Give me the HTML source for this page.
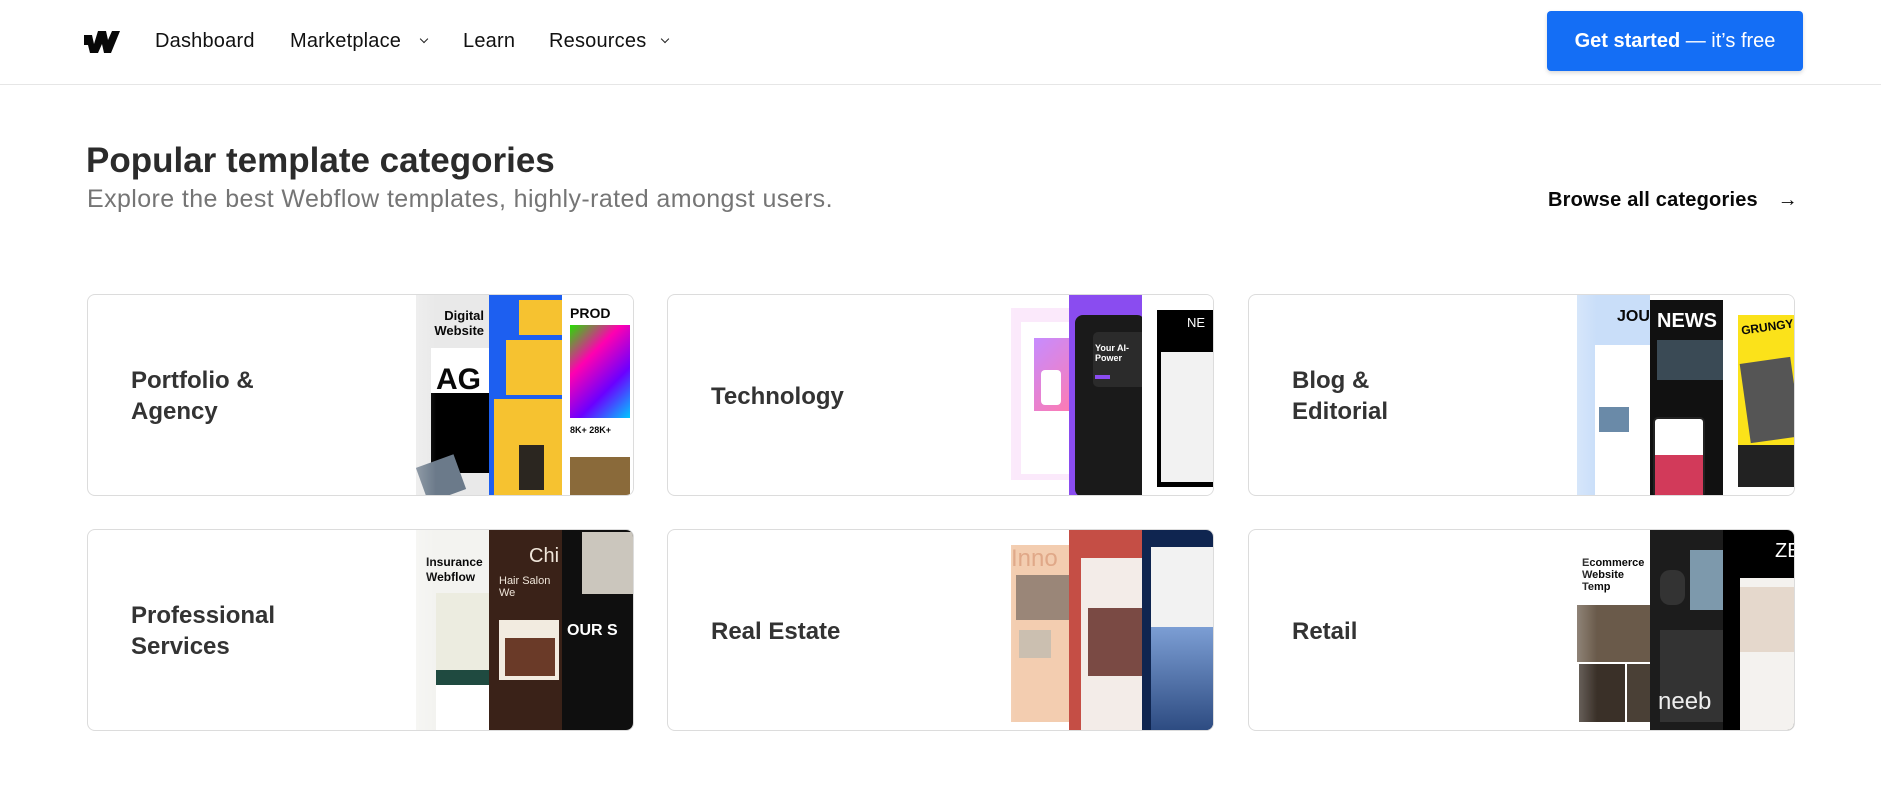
<!DOCTYPE html>
<html><head><meta charset="utf-8"><style>
*{margin:0;padding:0;box-sizing:border-box}
body{width:1881px;height:804px;background:#fff;font-family:"Liberation Sans",Arial,sans-serif;position:relative;overflow:hidden;color:#080808}
.hdr{position:absolute;left:0;top:0;width:1881px;height:85px;border-bottom:1px solid #e6e6e6}
.nav{position:absolute;top:30px;font-size:20px;color:#111;letter-spacing:.2px}
.chev{position:absolute;top:36px;width:6px;height:6px;border-right:1.5px solid #222;border-bottom:1.5px solid #222;transform:rotate(45deg)}
.btn{position:absolute;left:1547px;top:11px;width:256px;height:60px;background:#146ef5;border-radius:4px;box-shadow:0 2px 4px rgba(0,0,0,.15);color:#fff;font-size:20px;line-height:60px;text-align:center}
h1{position:absolute;left:86px;top:141px;font-size:35px;font-weight:bold;color:#2b2b2b}
.sub{position:absolute;left:87px;top:185px;font-size:25px;color:#757575;letter-spacing:.4px}
.browse{position:absolute;left:1548px;top:189px;font-size:20px;font-weight:bold;color:#080808;letter-spacing:.2px}
.card{position:absolute;width:547px;height:202px;border:1px solid #dcdcdc;border-radius:8px;overflow:hidden;background:#fff}
.lbl{position:absolute;left:43px;font-size:24px;font-weight:bold;color:#333;line-height:31px}
.img{position:absolute;left:328px;top:0;width:219px;height:202px}
.c{position:absolute;top:0;height:202px;overflow:hidden}
.c1{left:0;width:73px}.c2{left:73px;width:73px}.c3{left:146px;width:73px}
.fade{position:absolute;left:-60px;top:0;width:80px;height:202px;background:linear-gradient(90deg,#fff,rgba(255,255,255,0))}
.b{position:absolute}
</style></head><body>
<div class="hdr">
<svg style="position:absolute;left:84px;top:31px" width="36" height="22" viewBox="0 0 36 22"><path d="M0 4h8l2 9 4-13h8l2 9 4-9h8l-9 22h-7l-2-9-4 9H6L4 14H0z" fill="#080808"/><path d="M0 4h7v10H0z" fill="#080808"/></svg>
<div class="nav" style="left:155px">Dashboard</div>
<div class="nav" style="left:290px">Marketplace</div><div class="chev" style="left:421px"></div>
<div class="nav" style="left:463px">Learn</div>
<div class="nav" style="left:549px">Resources</div><div class="chev" style="left:662px"></div>
<div class="btn"><b>Get started</b> — it’s free</div>
</div>
<h1>Popular template categories</h1>
<div class="sub">Explore the best Webflow templates, highly-rated amongst users.</div>
<div class="browse">Browse all categories <span style="margin-left:14px;font-weight:normal">→</span></div>

<!-- row 1 -->
<div class="card" style="left:87px;top:294px">
<div class="lbl" style="top:70px">Portfolio &amp;<br>Agency</div>
<div class="img">
<div class="c c1" style="background:#e9e9e9"><div class="b" style="left:8px;top:13px;font-size:13px;font-weight:bold;line-height:15px;text-align:right;width:60px">Digital<br>Website</div><div class="b" style="left:15px;top:53px;width:60px;height:45px;background:#fff"></div><div class="b" style="left:20px;top:68px;font-size:30px;font-weight:bold">AG</div><div class="b" style="left:15px;top:98px;width:60px;height:80px;background:#000"></div><div class="b" style="left:5px;top:165px;width:40px;height:37px;background:#6b7a8a;transform:rotate(-20deg)"></div></div>
<div class="c c2" style="background:#1d5ff0"><div class="b" style="left:30px;top:5px;width:45px;height:35px;background:#f6c230"></div><div class="b" style="left:17px;top:45px;width:60px;height:55px;background:#f6c230"></div><div class="b" style="left:5px;top:104px;width:70px;height:98px;background:#f6c230"></div><div class="b" style="left:30px;top:150px;width:25px;height:45px;background:#2b2620"></div></div>
<div class="c c3" style="background:#fff"><div class="b" style="left:8px;top:10px;font-size:14px;font-weight:bold">PROD</div><div class="b" style="left:8px;top:30px;width:60px;height:93px;background:linear-gradient(135deg,#25e000,#ff00b0,#6b00ff,#00c8ff)"></div><div class="b" style="left:8px;top:130px;font-size:9px;font-weight:bold">8K+ 28K+</div><div class="b" style="left:8px;top:162px;width:60px;height:40px;background:#8a6a3a"></div></div>
<div class="fade"></div></div></div>

<div class="card" style="left:667px;top:294px">
<div class="lbl" style="top:86px">Technology</div>
<div class="img">
<div class="c c1" style="background:#fff"><div class="b" style="left:15px;top:13px;width:60px;height:172px;background:#fbe9fb"></div><div class="b" style="left:25px;top:27px;width:50px;height:152px;background:#fff"></div><div class="b" style="left:38px;top:43px;width:40px;height:73px;background:linear-gradient(135deg,#c68cff,#ff7ab0)"></div><div class="b" style="left:45px;top:75px;width:20px;height:35px;background:#fff;border-radius:4px"></div></div>
<div class="c c2" style="background:#8a4cf0"><div class="b" style="left:6px;top:20px;width:70px;height:182px;background:#1a1a1a;border-radius:8px"></div><div class="b" style="left:24px;top:37px;width:55px;height:55px;background:#2b2b2b;border-radius:5px"></div><div class="b" style="left:26px;top:48px;font-size:9px;color:#fff;font-weight:bold">Your AI-Power</div><div class="b" style="left:26px;top:80px;width:15px;height:4px;background:#8a4cf0"></div></div>
<div class="c c3" style="background:#fff"><div class="b" style="left:15px;top:15px;width:60px;height:177px;background:#000"></div><div class="b" style="left:45px;top:20px;font-size:13px;color:#fff">NE</div><div class="b" style="left:19px;top:57px;width:55px;height:130px;background:#f2f2f2"></div></div>
<div class="fade"></div></div></div>

<div class="card" style="left:1248px;top:294px">
<div class="lbl" style="top:70px">Blog &amp;<br>Editorial</div>
<div class="img">
<div class="c c1" style="background:#c9def9"><div class="b" style="left:40px;top:13px;font-size:16px;font-weight:bold">JOU</div><div class="b" style="left:18px;top:50px;width:60px;height:152px;background:#fff"></div><div class="b" style="left:22px;top:112px;width:30px;height:25px;background:#6a8aa8"></div></div>
<div class="c c2" style="background:#fff"><div class="b" style="left:0;top:5px;width:73px;height:197px;background:#111"></div><div class="b" style="left:7px;top:15px;font-size:20px;color:#fff;font-weight:bold">NEWS</div><div class="b" style="left:7px;top:45px;width:66px;height:40px;background:#3a4a55"></div><div class="b" style="left:3px;top:122px;width:52px;height:80px;background:#fff;border:2px solid #222;border-radius:5px"></div><div class="b" style="left:5px;top:160px;width:48px;height:42px;background:#d23a5a"></div></div>
<div class="c c3" style="background:#fff"><div class="b" style="left:15px;top:20px;width:58px;height:172px;background:#fbe21a"></div><div class="b" style="left:18px;top:25px;font-size:12px;font-weight:bold;transform:rotate(-8deg)">GRUNGY</div><div class="b" style="left:22px;top:65px;width:51px;height:80px;background:#555;transform:rotate(-8deg)"></div><div class="b" style="left:15px;top:150px;width:58px;height:42px;background:#222"></div></div>
<div class="fade"></div></div></div>

<!-- row 2 -->
<div class="card" style="left:87px;top:529px">
<div class="lbl" style="top:70px">Professional<br>Services</div>
<div class="img">
<div class="c c1" style="background:#f3f3f0"><div class="b" style="left:10px;top:25px;font-size:12px;font-weight:bold;line-height:15px">Insurance<br>Webflow</div><div class="b" style="left:20px;top:63px;width:60px;height:139px;background:#ecece0"></div><div class="b" style="left:20px;top:140px;width:60px;height:15px;background:#1f4a40"></div><div class="b" style="left:20px;top:155px;width:60px;height:47px;background:#fff"></div></div>
<div class="c c2" style="background:#3a2218"><div class="b" style="left:40px;top:15px;font-size:20px;color:#f0e6da">Chi</div><div class="b" style="left:10px;top:45px;font-size:11px;color:#f0e6da">Hair Salon We</div><div class="b" style="left:10px;top:90px;width:60px;height:60px;background:#f2ebe0"></div><div class="b" style="left:16px;top:108px;width:50px;height:38px;background:#6a3a28"></div></div>
<div class="c c3" style="background:#0f0f0f"><div class="b" style="left:20px;top:2px;width:53px;height:62px;background:#cbc6bd"></div><div class="b" style="left:5px;top:92px;font-size:16px;font-weight:bold;color:#fff">OUR S</div></div>
<div class="fade"></div></div></div>

<div class="card" style="left:667px;top:529px">
<div class="lbl" style="top:86px">Real Estate</div>
<div class="img">
<div class="c c1" style="background:#fff"><div class="b" style="left:15px;top:15px;width:60px;height:177px;background:#f3cdb0"></div><div class="b" style="left:15px;top:15px;font-size:24px;color:#e0a888">Inno</div><div class="b" style="left:20px;top:45px;width:55px;height:45px;background:#9a8678"></div><div class="b" style="left:23px;top:100px;width:32px;height:28px;background:#cbbfb0"></div></div>
<div class="c c2" style="background:#c54e45"><div class="b" style="left:12px;top:28px;width:61px;height:174px;background:#f3ece8"></div><div class="b" style="left:19px;top:78px;width:54px;height:68px;background:#7a4a44"></div></div>
<div class="c c3" style="background:#0f2550"><div class="b" style="left:9px;top:17px;width:64px;height:80px;background:#f2f2f2"></div><div class="b" style="left:9px;top:97px;width:64px;height:105px;background:linear-gradient(180deg,#7c9ed4,#2c4a80)"></div></div>
<div class="fade"></div></div></div>

<div class="card" style="left:1248px;top:529px">
<div class="lbl" style="top:86px">Retail</div>
<div class="img">
<div class="c c1" style="background:#fff"><div class="b" style="left:5px;top:27px;font-size:11px;line-height:12px;font-weight:bold">Ecommerce<br>Website Temp</div><div class="b" style="left:0;top:75px;width:73px;height:57px;background:#6a5a4a"></div><div class="b" style="left:2px;top:134px;width:46px;height:58px;background:#3a3028"></div><div class="b" style="left:50px;top:134px;width:23px;height:58px;background:#4a4036"></div></div>
<div class="c c2" style="background:#1c1c1c"><div class="b" style="left:40px;top:20px;width:33px;height:60px;background:#7d99ac"></div><div class="b" style="left:10px;top:40px;width:25px;height:35px;background:#333;border-radius:10px"></div><div class="b" style="left:10px;top:100px;width:63px;height:92px;background:#333"></div><div class="b" style="left:8px;top:158px;font-size:24px;color:#eee">neeb</div></div>
<div class="c c3" style="background:#000"><div class="b" style="left:52px;top:10px;font-size:20px;color:#fff">ZE</div><div class="b" style="left:17px;top:48px;width:56px;height:154px;background:#f4f2ef"></div><div class="b" style="left:17px;top:57px;width:56px;height:65px;background:#e5d8cc"></div></div>
<div class="fade"></div></div></div>
</body></html>
